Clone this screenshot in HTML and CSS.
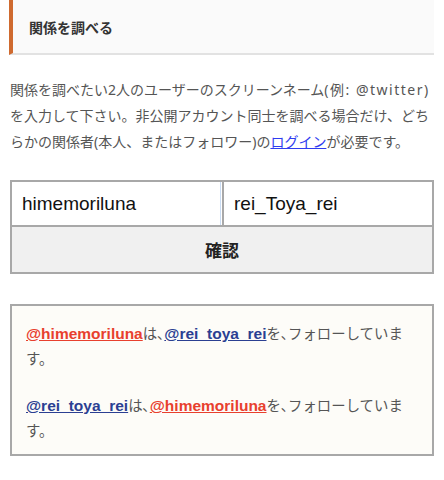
FILE: index.html
```html
<!DOCTYPE html>
<html lang="ja">
  <head>
    <meta charset="UTF-8" />
    <meta name="viewport" content="width=device-width, initial-scale=1.0" />
    <title>関係を調べる</title>
    <link rel="stylesheet" href="styles.css">
  </head>

  <body>
    <div class="container">
      <h2 class="section-title">関係を調べる</h2>

      <p class="intro">
        関係を調べたい2人のユーザーのスクリーンネーム<span class="example">(例: @twitter)</span>を入力して下さい。非公開アカウント同士を調べる場合だけ、どちらかの関係者(本人、またはフォロワー)の<a href="#" class="login-link">ログイン</a>が必要です。
      </p>

      <form class="lookup">
        <div class="lookup-row">
          <input type="text" class="name-input first" value="himemoriluna">
          <input type="text" class="name-input second" value="rei_Toya_rei">
        </div>
        <button type="button" class="lookup-button">確認</button>
      </form>

      <div class="result">
        <p>
          <a href="#" class="user user-a">@himemoriluna</a>は､<a href="#" class="user user-b">@rei_toya_rei</a>を､フォローしています。
        </p>
        <p>
          <a href="#" class="user user-b">@rei_toya_rei</a>は､<a href="#" class="user user-a">@himemoriluna</a>を､フォローしています。
        </p>
      </div>
    </div>
  </body>
</html>
```

FILE: styles.css
```css
body,
html {
  margin: 0;
  padding: 0;
  background-color: white;
  font-family: "Noto Sans", "Noto Sans CJK JP", sans-serif;
  color: #555;
}

.container {
  padding: 0 10px;
}

.section-title {
  margin: 0;
  height: 53px;
  display: flex;
  align-items: center;
  padding-left: 16px;
  background-color: #fafafa;
  border-left: 4px solid #cf6a2f;
  border-bottom: 2px solid #e2e2e2;
  margin-left: -1px;
  font-family: "Noto Sans CJK JP", sans-serif;
  font-size: 14px;
  font-weight: bold;
  color: #333;
}

.intro {
  margin: 22px 0 0 0;
  font-size: 14px;
  line-height: 26px;
}

.intro .example {
  letter-spacing: 1.5px;
}

.login-link {
  color: #2f3cf0;
  text-decoration: underline;
}

.lookup {
  margin-top: 25px;
  border: 2px solid #a8a8a8;
}

.lookup-row {
  display: flex;
  border-bottom: 2px solid #a8a8a8;
}

.name-input {
  flex: 1;
  min-width: 0;
  height: 43px;
  box-sizing: border-box;
  border: none;
  margin: 0;
  padding: 0 10px;
  font-family: "Liberation Sans", Arial, sans-serif;
  font-size: 19px;
  color: #111;
  background: white;
  outline: none;
}

.name-input.first {
  border-right: 1px solid #cadcf3;
}

.name-input.second {
  margin-left: 1px;
  border-left: 2px solid #a8a8a8;
}

.lookup-button {
  display: block;
  width: 100%;
  height: 45px;
  border: none;
  margin: 0;
  background-color: #f0f0f0;
  font-family: "Noto Sans CJK JP", sans-serif;
  font-size: 17px;
  font-weight: bold;
  color: #222;
}

.result {
  margin-top: 30px;
  border: 2px solid #a8a8a8;
  background-color: #fdfcf8;
  padding: 15px 16px 11px 14px;
  font-size: 14.4px;
  line-height: 25px;
  color: #555;
}

.result p {
  margin: 0 0 22px 0;
}

.result p:last-child {
  margin-bottom: 0;
}

.user {
  font-family: "Liberation Sans", sans-serif;
  font-size: 15.5px;
  font-weight: bold;
  text-decoration: underline;
}

.user-a {
  color: #e8402e;
}

.user-b {
  color: #2b3f92;
}
```
